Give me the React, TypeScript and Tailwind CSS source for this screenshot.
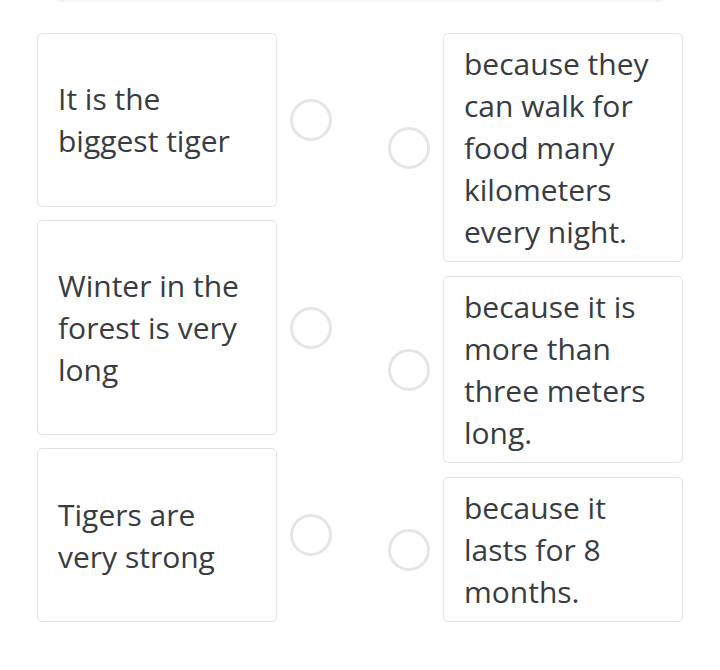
const left = [
  'It is the biggest tiger',
  'Winter in the forest is very long',
  'Tigers are very strong',
];

const right = [
  'because they can walk for food many kilometers every night.',
  'because it is more than three meters long.',
  'because it lasts for 8 months.',
];

function Circle() {
  return <span className="block h-[42px] w-[42px] shrink-0 rounded-full border-[3px] border-[#e3e5e7] bg-white" />;
}

export default function App() {
  return (
    <div className="min-h-screen bg-white font-['Open_Sans',sans-serif] text-[#383c41]">
      <div className="mx-[57px] h-[2px] rounded-b bg-[#f6f6f6]" />
      <div className="flex gap-[56px] pl-[37px] pt-[31px]">
        <div className="flex w-[295px] flex-col gap-[13px]">
          {left.map((text) => (
            <div key={text} className="flex flex-auto items-center gap-[13px]">
              <div className="flex w-[240px] items-center self-stretch rounded-[5px] border border-[#e2e2e2] px-[20px] pt-[9px] pb-[8px] text-[30px] leading-[42px]">
                {text}
              </div>
              <Circle />
            </div>
          ))}
        </div>
        <div className="flex w-[295px] flex-col gap-[14px]">
          {right.map((text) => (
            <div key={text} className="flex items-center gap-[13px]">
              <Circle />
              <div className="w-[240px] rounded-[5px] border border-[#e2e2e2] px-[20px] pt-[9px] pb-[8px] text-[30px] leading-[42px]">
                {text}
              </div>
            </div>
          ))}
        </div>
      </div>
    </div>
  );
}
